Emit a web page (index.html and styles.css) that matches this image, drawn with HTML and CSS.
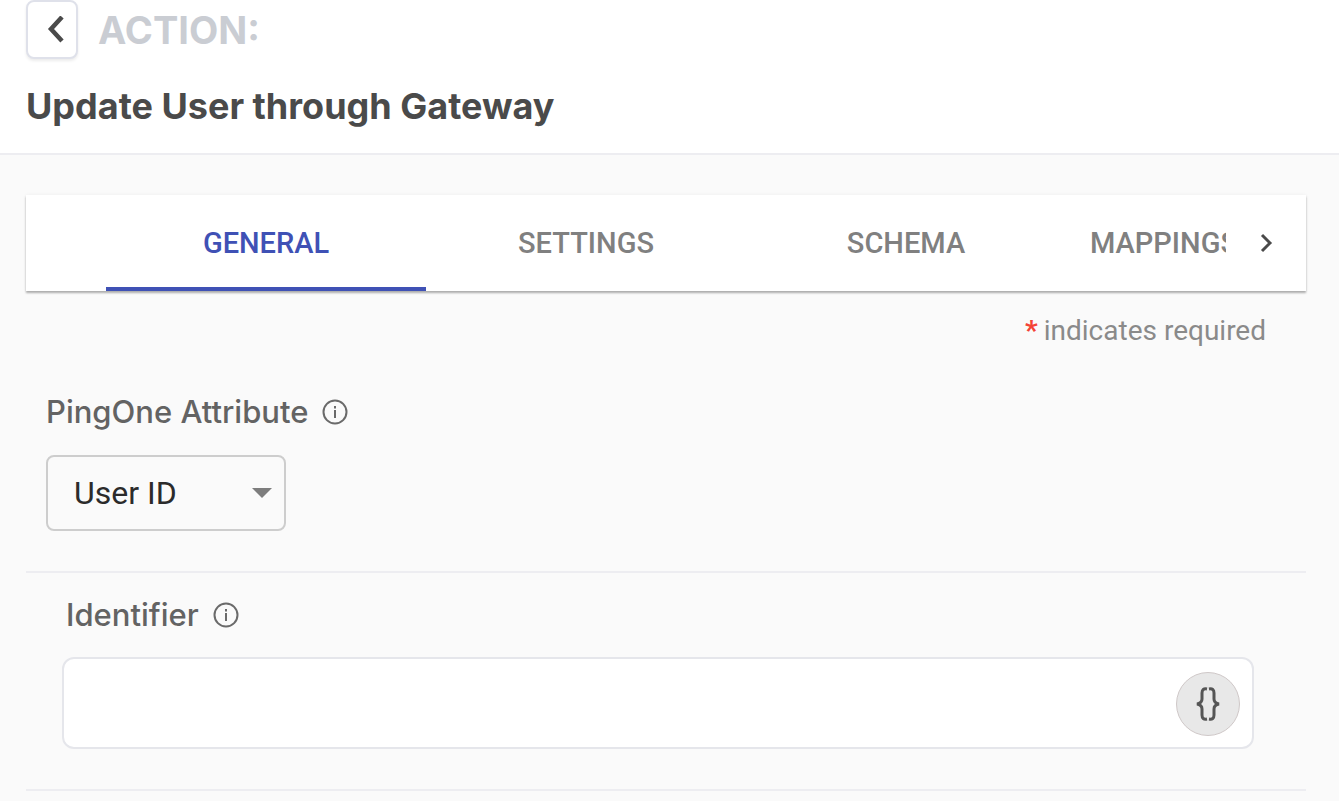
FILE: index.html
```html
<!DOCTYPE html>
<html lang="en">
<head>
    <meta charset="UTF-8">
    <meta name="viewport" content="width=device-width, initial-scale=1.0">
    <title>Update User through Gateway</title>
    <link rel="stylesheet" href="styles.css">
</head>
<body>
    <header class="header">
        <div class="header-top">
            <button class="back-btn" type="button" aria-label="Back">
                <svg width="20" height="28" viewBox="0 0 20 28" fill="none" stroke="#4a4a4a" stroke-width="4.500">
                    <path d="M17 1 6 13l11 12"/>
                </svg>
            </button>
            <span class="header-type">ACTION:</span>
        </div>
        <h1 class="header-title">Update User through Gateway</h1>
    </header>

    <main class="content">
        <nav class="tabs">
            <div class="tab-list" role="tablist">
                <button class="tab active" type="button" role="tab" aria-selected="true">GENERAL</button>
                <button class="tab" type="button" role="tab">SETTINGS</button>
                <button class="tab" type="button" role="tab">SCHEMA</button>
                <button class="tab tab-start" type="button" role="tab">MAPPINGS</button>
            </div>
            <button class="scroll-btn" type="button" aria-label="Scroll tabs">
                <svg width="16" height="20" viewBox="0 0 16 20" fill="none" stroke="#4a4a4a" stroke-width="3">
                    <path d="m4 2 8 8-8 8"/>
                </svg>
            </button>
        </nav>

        <p class="required-note"><span class="star">*</span>indicates required</p>

        <section class="field">
            <div class="field-head">
                <label for="attribute">PingOne Attribute</label>
                <svg class="info" viewBox="0 0 26 26" fill="none" stroke="#6a6a6a" stroke-width="2">
                    <circle cx="13" cy="13" r="11.5"/>
                    <path d="M13 11v8M13 7v2.500"/>
                </svg>
            </div>
            <div class="select-wrap">
                <select id="attribute">
                    <option>User ID</option>
                </select>
                <svg class="arrow" width="20" height="10" viewBox="0 0 20 10">
                    <path d="M0 0h20L10 10z" fill="#7d7d7d"/>
                </svg>
            </div>
        </section>

        <section class="field field-identifier">
            <div class="field-head">
                <label for="identifier">Identifier</label>
                <svg class="info" viewBox="0 0 26 26" fill="none" stroke="#6a6a6a" stroke-width="2">
                    <circle cx="13" cy="13" r="11.5"/>
                    <path d="M13 11v8M13 7v2.500"/>
                </svg>
            </div>
            <div class="input-box">
                <input type="text" id="identifier">
                <button class="braces-btn" type="button" aria-label="Insert variable">
                    <svg width="26" height="34" viewBox="0 0 26 34" fill="none" stroke="#555" stroke-width="3">
                        <path d="M12 2Q7 1 7 6v6q0 4-5 5q5 1 5 5v6q0 5 5 4"/>
                        <path d="M14 2q5-1 5 4v6q0 4 5 5q-5 1-5 5v6q0 5-5 4"/>
                    </svg>
                </button>
            </div>
        </section>
    </main>
</body>
</html>
```
FILE: styles.css
```css
* {
    box-sizing: border-box;
}
body {
    margin: 0;
    font-family: Roboto, "Liberation Sans", sans-serif;
    background-color: #fafafa;
    color: #6a6a6a;
}
button {
    padding: 0;
    border: none;
    background: none;
    font-family: inherit;
    cursor: pointer;
}
svg {
    display: block;
    flex-shrink: 0;
}
.header {
    padding: 0 26px 25px;
    background-color: #fff;
    border-bottom: 2px solid #ededf1;
    font-family: Inter, "Liberation Sans", sans-serif;
}
.header-top {
    display: flex;
    align-items: center;
    gap: 20px;
}
.back-btn {
    display: flex;
    align-items: center;
    justify-content: center;
    width: 52px;
    height: 59px;
    padding-left: 6px;
    border: 2px solid #dfe1ea;
    border-radius: 8px;
    background-color: #fff;
    box-shadow: 0 2px 3px rgba(0, 0, 0, 0.08);
}
.header-type {
    font-size: 38px;
    line-height: 58px;
    font-weight: 700;
    color: #cacdd3;
}
.header-title {
    margin: 25px 0 0;
    font-size: 36px;
    line-height: 44px;
    font-weight: 700;
    color: #4a4a4a;
}
.content {
    padding: 40px 33px 0 26px;
}
.tabs {
    display: flex;
    height: 96px;
    padding-left: 80px;
    background-color: #fff;
    box-shadow: 0 2px 2px rgba(0, 0, 0, 0.3), 0 0 4px rgba(0, 0, 0, 0.05);
}
.tab-list {
    display: flex;
    flex: 1;
    min-width: 0;
    overflow: hidden;
}
.tab {
    flex: 0 0 320px;
    padding: 0 24px;
    font-size: 29px;
    font-weight: 500;
    color: #808080;
}
.tab.active {
    color: #3f51b5;
    box-shadow: inset 0 -4px #3f51b5;
}
.tab-start {
    text-align: left;
}
.scroll-btn {
    display: flex;
    align-items: center;
    justify-content: center;
    width: 80px;
}
.required-note {
    margin: 0;
    padding: 23px 40px 0 0;
    text-align: right;
    font-size: 28px;
    line-height: 34px;
    color: #8a8a8a;
}
.star {
    margin-right: 6px;
    font-weight: 700;
    color: #f44336;
}
.field {
    padding: 44px 20px 40px;
    border-bottom: 2px solid #ededf1;
}
.field-head {
    display: flex;
    align-items: center;
    gap: 14px;
    font-family: Inter, "Liberation Sans", sans-serif;
    font-size: 31px;
    line-height: 40px;
    font-weight: 500;
    color: #636363;
}
.info {
    width: 26px;
    height: 26px;
}
.select-wrap {
    position: relative;
    width: 240px;
    margin-top: 23px;
}
select {
    display: block;
    width: 100%;
    height: 76px;
    padding: 0 26px;
    border: 2px solid #cdcdcd;
    border-radius: 8px;
    background: none;
    appearance: none;
    font-family: inherit;
    font-size: 32px;
    color: #2b2b2b;
}
.arrow {
    position: absolute;
    top: 33px;
    right: 14px;
    pointer-events: none;
}
.field-identifier {
    padding: 22px 52px 40px 36px;
}
.field-identifier label {
    padding-left: 4px;
}
.input-box {
    display: flex;
    align-items: center;
    height: 92px;
    margin-top: 22px;
    padding: 2px 12px 0 0;
    border: 2px solid #e5e6eb;
    border-radius: 12px;
    background-color: #fff;
}
.input-box input {
    flex: 1;
    min-width: 0;
    height: 100%;
    padding: 0 24px;
    border: none;
    outline: none;
    background: none;
    font-family: inherit;
    font-size: 32px;
}
.braces-btn {
    display: flex;
    align-items: center;
    justify-content: center;
    width: 64px;
    height: 64px;
    border: 1px solid #cfc8c8;
    border-radius: 50%;
    background-color: #e8e8e8;
}
```
